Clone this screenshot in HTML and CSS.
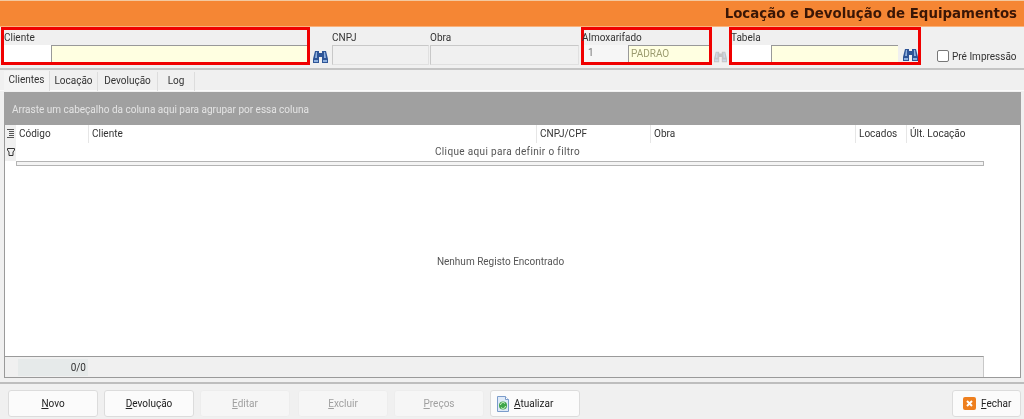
FILE: index.html
```html
<!DOCTYPE html>
<html lang="pt-br">

<head>
  <meta charset="UTF-8">
  <title>Locação e Devolução de Equipamentos</title>
  <link rel="stylesheet" href="styles.css">
</head>

<body>
  <svg class="defs" width="0" height="0">
    <symbol id="binoculo" viewBox="0 0 15 13">
      <path d="M2 1h4v2h3V1h4l2 8v4H9V7H6v6H0V9z" />
      <path class="brilho" d="M3 2h1v6H2zM11 2h1l1 6h-2zM1 10h4v2H1zM10 10h4v2h-4z" />
    </symbol>
  </svg>

  <div class="topo">
    <h1>Locação e Devolução de Equipamentos</h1>
  </div>

  <div class="filtros">
    <div class="campo marcado cliente">
      <label>Cliente</label>
      <div class="linha">
        <div class="entrada branca cod"></div>
        <div class="entrada amarela nome"></div>
      </div>
    </div>
    <svg class="bin bin-cliente"><use href="#binoculo" /></svg>
    <div class="campo cnpj">
      <label>CNPJ</label>
      <div class="entrada cinza"></div>
    </div>
    <div class="campo obra">
      <label>Obra</label>
      <div class="entrada cinza"></div>
    </div>
    <div class="campo marcado almox">
      <label>Almoxarifado</label>
      <div class="linha">
        <div class="entrada branca cod-almox">1</div>
        <div class="entrada amarela nome-almox">PADRAO</div>
      </div>
    </div>
    <svg class="bin bin-off"><use href="#binoculo" /></svg>
    <div class="campo marcado tabela">
      <label>Tabela</label>
      <div class="linha">
        <div class="entrada branca cod-tabela"></div>
        <div class="entrada amarela nome-tabela"></div>
        <svg class="bin bin-tabela"><use href="#binoculo" /></svg>
      </div>
    </div>
    <div class="check">
      <span class="caixa"></span>
      <span>Pré Impressão</span>
    </div>
  </div>

  <div class="abas">
    <div class="aba ativa">Clientes</div>
    <div class="aba loc">Locação</div>
    <div class="aba dev">Devolução</div>
    <div class="aba log">Log</div>
  </div>

  <div class="painel">
    <div class="agrupar">Arraste um cabeçalho da coluna aqui para agrupar por essa coluna</div>
    <div class="grade">
      <div class="cabecalho">
        <div class="ind">
          <svg width="7" height="10" viewBox="0 0 7 10">
            <path d="M0 .5h7M2 2.500h5M2 4.500h5M2 6.500h5M0 8.500h7" stroke="#555" stroke-width="1" />
          </svg>
        </div>
        <div class="col">Código</div>
        <div class="col">Cliente</div>
        <div class="col">CNPJ/CPF</div>
        <div class="col">Obra</div>
        <div class="col">Locados</div>
        <div class="col">Últ. Locação</div>
      </div>
      <div class="filtro">
        <div class="ind-filtro">
          <svg width="8" height="8" viewBox="0 0 8 8">
            <path d="M.5.500h7v1.500L6 4v3.500H2V4L.5 2z" fill="none" stroke="#333" />
          </svg>
        </div>
        <div class="filtro-txt">Clique aqui para definir o filtro</div>
      </div>
      <div class="barra"></div>
      <div class="vazio">Nenhum Registo Encontrado</div>
      <div class="rodape">
        <div class="contador">0/0</div>
      </div>
    </div>
  </div>

  <div class="botoes">
    <button class="btn"><u>N</u>ovo</button>
    <button class="btn"><u>D</u>evolução</button>
    <button class="btn off"><u>E</u>ditar</button>
    <button class="btn off excluir"><u>E</u>xcluir</button>
    <button class="btn off"><u>P</u>reços</button>
    <button class="btn atualizar">
      <svg width="12" height="16" viewBox="0 0 12 16">
        <path d="M.5.500h8l3 3v12H.5z" fill="#dfeaf8" stroke="#7b9ccb" />
        <path d="M8.500.500v3h3" fill="#fff" stroke="#7b9ccb" />
        <circle cx="6" cy="9.500" r="4" fill="#3fa64a" />
        <path d="M3.500 9a2.500 2.500 0 0 1 4.500-1.500M8.500 10a2.500 2.500 0 0 1-4.500 1.500" fill="none" stroke="#d8f2d0" stroke-width="1" />
      </svg>
      <span><u>A</u>tualizar</span>
    </button>
    <button class="btn fechar">
      <svg width="13" height="13" viewBox="0 0 13 13">
        <rect width="13" height="13" rx="2" fill="#ee7f1e" />
        <path d="M4 4l5 5M9 4l-5 5" stroke="#fff" stroke-width="2" />
      </svg>
      <span><u>F</u>echar</span>
    </button>
  </div>
</body>

</html>
```

FILE: styles.css
```css
* {
  box-sizing: border-box;
}

html, body {
  margin: 0px;
  height: 419px;
  overflow: hidden;
}

body {
  background-color: #F0F0F0;
  font-family: Roboto, sans-serif;
  font-size: 10px;
  color: #333;
  filter: blur(.3px);
}

.defs {
  display: block;
  height: 0;
}

.topo {
  height: 27px;
  background-color: #F58634;
  border-top: 1px solid #F3C9A0;
  border-bottom: 1px solid #F9B27C;
  display: flex;
  justify-content: flex-end;
  align-items: center;
  padding-right: 7px;
}

h1 {
  margin: 0;
  font-family: "DejaVu Sans", sans-serif;
  font-size: 13.350px;
  font-weight: bold;
  color: #3A1606;
}

.filtros {
  height: 43px;
  display: flex;
  padding-left: 1px;
  border-bottom: 2px solid #C4C4C4;
}

.campo label {
  display: block;
  height: 15px;
  line-height: 15px;
  white-space: nowrap;
}

.campo.marcado {
  border: 3px solid #F00000;
  height: 38px;
  padding: 0;
}

.almox label {
  margin-left: -2px;
}

.tabela label {
  margin-left: -1px;
}

.linha {
  display: flex;
}

.entrada {
  height: 17px;
  line-height: 16px;
}

.branca {
  background-color: #FFF;
}

.amarela {
  background-color: #FFFFE1;
  border-left: 1px solid #999;
  border-top: 1px solid #999;
}

.cinza {
  height: 20px;
  background-color: #F0F0F0;
  border: 1px solid #C8C8C8;
  border-right-color: #E0E0E0;
  border-bottom-color: #E0E0E0;
}

.cliente {
  width: 309px;
}

.cod {
  width: 47px;
}

.nome {
  flex: 1;
}

.bin {
  width: 15px;
  height: 13px;
  fill: #2E5597;
}

.brilho {
  fill: #8FB0DE;
}

.bin-cliente {
  margin: 23px 4px 0 3px;
  flex-shrink: 0;
}

.cnpj {
  width: 97px;
  margin-top: 3px;
}

.obra {
  width: 149px;
  margin-left: 1px;
  margin-top: 3px;
}

.almox {
  width: 131px;
  margin-left: 2px;
}

.cod-almox {
  width: 44px;
  padding-left: 4px;
  color: #777;
  background-color: #F6F6F6;
}

.nome-almox {
  flex: 1;
  padding-left: 2px;
  color: #9C9C70;
}

.bin-off {
  margin: 23px 2px 0 2px;
  opacity: .35;
  fill: #777;
  width: 13px;
}

.tabela {
  width: 192px;
}

.cod-tabela {
  width: 39px;
}

.nome-tabela {
  width: 127px;
}

.bin-tabela {
  margin: 3px 0 0 5px;
}

.check {
  display: flex;
  align-items: center;
  gap: 3px;
  margin: 22px 0 0 16px;
  height: 14px;
  white-space: nowrap;
}

.caixa {
  width: 12px;
  height: 12px;
  background-color: #FFF;
  border: 1px solid #777;
  border-radius: 2px;
}

.abas {
  height: 21px;
  display: flex;
  padding: 1px 0 0 4px;
  border-bottom: 1px solid #FAFAFA;
}

.aba {
  height: 19px;
  margin-top: 1px;
  line-height: 17px;
  text-align: center;
  border-right: 1px solid #DDD;
}

.ativa {
  width: 46px;
  margin-top: 0;
  height: 20px;
  background-color: #F4F4F4;
}

.loc {
  width: 48px;
}

.dev {
  width: 60px;
}

.log {
  width: 37px;
}

.painel {
  margin: 1px 3px 0 4px;
}

.agrupar {
  height: 33px;
  background-color: #A0A0A0;
  color: #E4E4E4;
  line-height: 35px;
  padding-left: 8px;
}

.grade {
  height: 253px;
  background-color: #FFF;
  border: 1px solid #9A9A9A;
  border-top: none;
  display: flex;
  flex-direction: column;
}

.cabecalho {
  height: 18px;
  display: grid;
  grid-template-columns: 11px 73px 448px 114px 205px 51px 78px;
  line-height: 18px;
}

.ind {
  display: flex;
  justify-content: center;
  align-items: center;
  background-color: #F0F0F0;
}

.col {
  padding-left: 3px;
  border-right: 1px solid #E6E6E6;
}

.col:last-child {
  border-right: none;
}

.filtro {
  height: 18px;
  display: flex;
}

.ind-filtro {
  width: 11px;
  background-color: #F0F0F0;
  display: flex;
  justify-content: center;
  align-items: center;
}

.filtro-txt {
  width: 983px;
  text-align: center;
  line-height: 18px;
  letter-spacing: .35px;
  color: #555;
}

.barra {
  height: 5px;
  margin-left: 11px;
  width: 968px;
  background-color: #F4F4F4;
  border: 1px solid #B4B4B4;
}

.vazio {
  flex: 1;
  display: flex;
  justify-content: center;
  align-items: center;
  padding: 0 24px 0 0;
  color: #555;
}

.rodape {
  height: 21px;
  width: 979px;
  background-color: #F0F0F0;
  border-top: 1px solid #9A9A9A;
  border-right: 1px solid #C8C8C8;
  padding: 2px 0 1px 13px;
}

.contador {
  width: 70px;
  height: 17px;
  line-height: 17px;
  text-align: right;
  padding-right: 2px;
  background-color: #E6EAEA;
}

.botoes {
  margin-top: 4px;
  border-top: 2px solid #BDBDBD;
  display: flex;
  gap: 6px;
  padding: 6px 3px 0 8px;
}

.btn {
  width: 90px;
  height: 27px;
  padding: 0;
  font: inherit;
  color: #222;
  background-color: #FBFBFB;
  border: 1px solid #DCDCDC;
  border-radius: 3px;
}

.off {
  color: #A0A0A0;
  background-color: #F6F6F6;
  border-color: #EDEDED;
}

.excluir {
  margin-left: 2px;
}

.atualizar,
.fechar {
  display: flex;
  align-items: center;
  gap: 5px;
}

.atualizar {
  padding-left: 6px;
}

.fechar {
  width: 69px;
  margin-left: auto;
  padding-left: 10px;
}
```
